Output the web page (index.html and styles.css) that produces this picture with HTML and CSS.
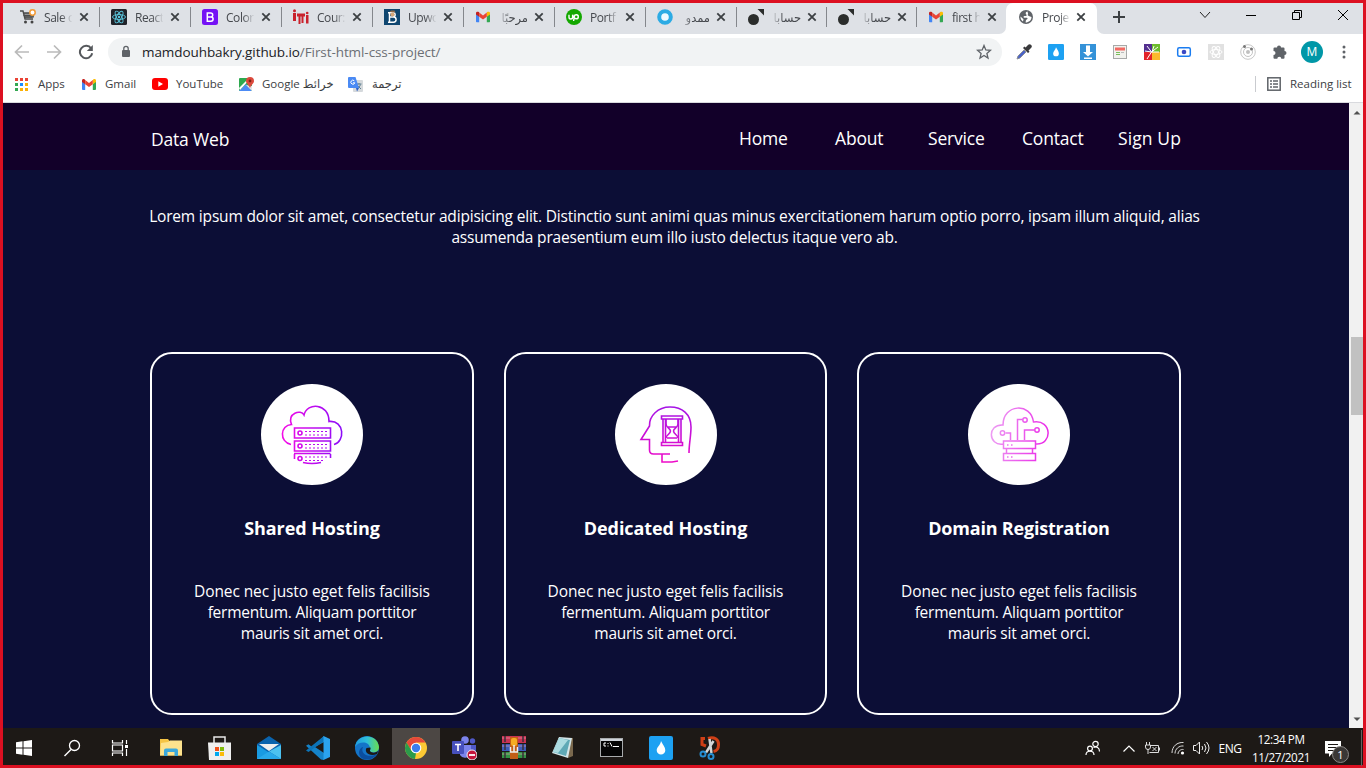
FILE: index.html
```html
<!DOCTYPE html>
<html lang="en">
<head>
<meta charset="utf-8">
<title>Project</title>
<link rel="stylesheet" href="styles.css">
</head>
<body>
<svg class="defs" width="0" height="0">
  <defs>
    <symbol id="gmail" viewBox="0 0 14 11"><path d="M0 1.5V10a1 1 0 0 0 1 1h2.2V5z" fill="#4285f4"/><path d="M14 1.5V10a1 1 0 0 1-1 1h-2.2V5z" fill="#34a853"/><path d="M10.8 1.3V5.2L14 2.9V1.5C14 0 12.300-.5 11.200.4z" fill="#fbbc04"/><path d="M0 1.500C0 0 1.700-.5 2.800.4l.4.5v4.300L0 2.900z" fill="#c5221f"/><path d="M3.200 1 7 3.900 10.800 1v4.200L7 8.100 3.200 5.200z" fill="#ea4335"/></symbol>
    <symbol id="close" viewBox="0 0 10 10"><path d="M1.300 1.300 8.700 8.700M8.700 1.300 1.300 8.700" stroke="#3c4043" stroke-width="1.800"/></symbol>
    <symbol id="dot" viewBox="0 0 16 16"><circle cx="5.500" cy="10.500" r="5.500" fill="#2b2d2c"/><path d="M9.500 0H16V6.500z" fill="#2b2d2c"/></symbol>
    <symbol id="drop" viewBox="0 0 24 24"><rect width="24" height="24" rx="2" fill="#1da1f2"/><path d="M12 5c2 4 4.300 6.300 4.300 9.200a4.300 4.300 0 0 1-8.600 0C7.700 11.300 11.500 9 12 5z" fill="#fff"/></symbol>
    <linearGradient id="gA" gradientUnits="userSpaceOnUse" x1="22" y1="0" x2="82" y2="0"><stop offset="0" stop-color="#f30be6"/><stop offset="1" stop-color="#8a0cf8"/></linearGradient>
    <linearGradient id="gB" gradientUnits="userSpaceOnUse" x1="0" y1="22" x2="0" y2="78"><stop offset="0" stop-color="#a414e6"/><stop offset="1" stop-color="#ee0cc8"/></linearGradient>
    <linearGradient id="gC" gradientUnits="userSpaceOnUse" x1="0" y1="0" x2="60" y2="10"><stop offset="0" stop-color="#eda6f4"/><stop offset="1" stop-color="#ea2be8"/></linearGradient>
  </defs>
</svg>
<div class="screen">
  <header class="tabstrip">
    <div class="tabs">
      <div class="tab"><svg width="16" height="16" viewBox="0 0 16 16"><path d="M0 2h3l2 8h8M4 4h10l-1 4H5" fill="none" stroke="#4b4b4b" stroke-width="1.400"/><path d="M5 4v5M7 4v5M9 4v5M11 4v5M3.500 6.500H13" stroke="#4b4b4b"/><circle cx="5.500" cy="13" r="1.500" fill="#444"/><circle cx="12" cy="13" r="1.500" fill="#444"/><circle cx="12.500" cy="3.500" r="2.700" fill="#fff" stroke="#f29a36" stroke-width="1.500"/></svg><span class="title">Sale o</span><svg class="x"><use href="#close"/></svg></div>
      <div class="tab"><svg width="16" height="16" viewBox="0 0 16 16"><rect width="16" height="16" rx="1.500" fill="#20232a"/><g fill="none" stroke="#5bc8e0" stroke-width=".9"><ellipse cx="8" cy="8" rx="6.500" ry="2.500"/><ellipse cx="8" cy="8" rx="6.500" ry="2.500" transform="rotate(60 8 8)"/><ellipse cx="8" cy="8" rx="6.500" ry="2.500" transform="rotate(120 8 8)"/></g><circle cx="8" cy="8" r="1.200" fill="#5bc8e0"/></svg><span class="title">React</span><svg class="x"><use href="#close"/></svg></div>
      <div class="tab"><svg width="16" height="16" viewBox="0 0 16 16"><rect width="16" height="16" rx="2.500" fill="#7512f5"/><path d="M5.300 4h3.400a2 2 0 0 1 0 4H5.300zm0 4h3.700a2 2 0 0 1 0 4.200H5.300z" fill="none" stroke="#fff" stroke-width="1.500"/></svg><span class="title">Color</span><svg class="x"><use href="#close"/></svg></div>
      <div class="tab"><svg width="16" height="16" viewBox="0 0 16 16"><path d="M0 4h3v8H0zM4 4.500h8v3h-1.500V14H8.500V7.500H7.500V15h-2V7.500H4zM13 6h2.500v8.500H13z" fill="#c9222c"/><circle cx="1.500" cy="1.700" r="1.500" fill="#c9222c"/><circle cx="14.200" cy="4" r="1.300" fill="#c9222c"/></svg><span class="title">Cour:</span><svg class="x"><use href="#close"/></svg></div>
      <div class="tab"><svg width="16" height="16" viewBox="0 0 16 16"><rect width="16" height="16" fill="#0f4670"/><path d="M5.500 4v9M4 13.200h5.500a2.600 2.600 0 0 0 0-5.200H6M4 3.700h5a2 2 0 0 1 0 4.300" fill="none" stroke="#fff" stroke-width="1.500"/><circle cx="8.500" cy="5.500" r="2" fill="#d7a778"/><path d="M5.500 3 7 1.500h3.500l1 2z" fill="#8d6847"/></svg><span class="title">Upwo</span><svg class="x"><use href="#close"/></svg></div>
      <div class="tab"><svg width="16" height="16" viewBox="-1 -2.500 16 16"><use href="#gmail" width="14" height="11"/></svg><span class="title rtl" dir="rtl">مرحبًا</span><svg class="x"><use href="#close"/></svg></div>
      <div class="tab"><svg width="16" height="16" viewBox="0 0 16 16"><circle cx="8" cy="8" r="8" fill="#14a800"/><path d="M3 5.800v2.400a1.800 1.800 0 0 0 3.600 0V5.800c.5 1.700 1.500 4 3.700 4a2 2 0 1 0-2-2.200L7.600 12" fill="none" stroke="#fff" stroke-width="1.400"/></svg><span class="title">Portf</span><svg class="x"><use href="#close"/></svg></div>
      <div class="tab"><svg width="16" height="16" viewBox="0 0 16 16"><circle cx="8" cy="8" r="5.800" fill="#eef9ff" stroke="#2cabe4" stroke-width="4"/></svg><span class="title rtl" dir="rtl">ممدو</span><svg class="x"><use href="#close"/></svg></div>
      <div class="tab narrow"><svg width="16" height="16"><use href="#dot"/></svg><span class="title rtl" dir="rtl">حسابا</span><svg class="x"><use href="#close"/></svg></div>
      <div class="tab narrow"><svg width="16" height="16"><use href="#dot"/></svg><span class="title rtl" dir="rtl">حسابا</span><svg class="x"><use href="#close"/></svg></div>
      <div class="tab narrow last"><svg width="16" height="16" viewBox="-1 -2.500 16 16"><use href="#gmail" width="14" height="11"/></svg><span class="title">first h</span><svg class="x"><use href="#close"/></svg></div>
    </div>
    <div class="tab active"><svg width="16" height="16" viewBox="0 0 16 16"><circle cx="8" cy="8" r="7" fill="#5f6368"/><path d="M9.500 2.400c-2 .3-2.300 2.200-1.200 3 1 .8 0 1.700-1.800 1.700-1 0-1.400 1.500-.4 1.700h2.700c1 0 1 1.500 0 1.700-1 .3-1 1.400-1.200 3 3.300 0 5.900-2.300 5.900-5.500L11.300 7.200c-1.300-.3-2.300-1.200-1.200-2.200zM2.500 7.500l3 2.800-.5 2.200C3.200 11.500 2.400 9.800 2.500 7.500z" fill="#fff"/></svg><span class="title">Proje</span><svg class="x"><use href="#close"/></svg></div>
    <div class="winbar">
      <svg width="12" height="12" viewBox="0 0 12 12"><path d="M6 0v12M0 6h12" stroke="#3c4043" stroke-width="2"/></svg>
      <svg class="wc chev" width="12" height="12" viewBox="0 0 12 12"><path d="M1 3l5 5.500L11 3" fill="none" stroke="#222"/></svg>
      <svg class="wc mini" width="12" height="12" viewBox="0 0 12 12"><path d="M1 6.500h10" stroke="#000"/></svg>
      <svg class="wc maxi" width="12" height="12" viewBox="0 0 12 12"><path d="M1.500 3.500h7v7h-7zM3.500 3.500v-2h7v7h-2" fill="none" stroke="#000"/></svg>
      <svg class="wc quit" width="12" height="12" viewBox="0 0 12 12"><path d="M1 1l10 10M11 1 1 11" stroke="#000"/></svg>
    </div>
  </header>

  <div class="toolbar">
    <svg width="16" height="16" viewBox="0 0 16 16"><path d="M15 8H2M8 1.500 1.500 8 8 14.500" fill="none" stroke="#bababa" stroke-width="1.700"/></svg>
    <svg width="16" height="16" viewBox="0 0 16 16"><path d="M1 8h13M8 1.500 14.500 8 8 14.500" fill="none" stroke="#bababa" stroke-width="1.700"/></svg>
    <svg width="16" height="16" viewBox="0 0 16 16"><path d="M13.200 4.500A6.200 6.200 0 1 0 14.200 9.300" fill="none" stroke="#55585c" stroke-width="2"/><path d="M14.800 1v6H8.800z" fill="#55585c"/></svg>
    <div class="omnibox">
      <svg width="12" height="14" viewBox="0 0 12 14"><rect x="2" y="5" width="8" height="7" rx="1" fill="#5f6368"/><path d="M3.800 5.500V3.600a2.200 2.200 0 0 1 4.400 0v1.900" fill="none" stroke="#5f6368" stroke-width="1.300"/></svg>
      <span class="url"><b>mamdouhbakry.github.io</b>/First-html-css-project/</span>
      <svg class="star" width="16" height="16" viewBox="0 0 16 16"><path d="M8 1.500l1.800 4.400 4.700.4-3.600 3.100 1.100 4.600L8 11.500 4 14l1.100-4.600L1.500 6.300l4.700-.4z" fill="none" stroke="#5f6368" stroke-width="1.300"/></svg>
    </div>
    <div class="exts">
      <svg width="16" height="16" viewBox="0 0 16 16"><path d="M1 15l1-3 6-6 2 2-6 6z" fill="#4a63c9" stroke="#8b8f98"/><path d="M7 4l5 5 1.500-1.300-1-1.200 2.500-2.500A2 2 0 0 0 12.200.8L9.600 3.500 8.400 2.600z" fill="#3a3a3c"/></svg>
      <svg width="16" height="16"><use href="#drop"/></svg>
      <svg width="16" height="16" viewBox="0 0 16 16"><rect width="16" height="16" fill="#3492d8"/><path d="M6 1.500h4V8h3L8 12.500 3 8h3zM4 13.500h8V15H4z" fill="#fff"/></svg>
      <svg width="16" height="16" viewBox="0 0 16 16"><rect x="1.500" y="1.500" width="13" height="13" fill="#f2f2ee" stroke="#a7a9a8"/><rect x="3" y="3.500" width="10" height="3" fill="#f26a63"/><path d="M4 8.500h4M4 10.500h4" stroke="#79bd5b"/><path d="M9 8.500h3" stroke="#bbb"/></svg>
      <svg width="16" height="16" viewBox="0 0 16 16"><rect width="8" height="8" fill="#54308f"/><rect x="8" width="8" height="8" fill="#6dbd2d"/><rect y="8" width="8" height="8" fill="#e2222b"/><rect x="8" y="8" width="8" height="8" fill="#fbb92d"/><path d="M3 15 7.500 8M7.500 8 14 3M7.500 8 3 2M8 8l2-6M7.500 8H15M7.500 8 1 7" stroke="#fff" stroke-width="1" fill="none"/></svg>
      <svg width="16" height="16" viewBox="0 0 16 16"><rect x="1.700" y="3.700" width="12.600" height="8.600" rx="1.500" fill="#fff" stroke="#1a7cf0" stroke-width="1.500"/><circle cx="8" cy="8" r="2.300" fill="#3b49c4"/></svg>
      <svg width="16" height="16" viewBox="0 0 16 16"><rect width="16" height="16" fill="#e1e1e1"/><g fill="none" stroke="#fff"><ellipse cx="8" cy="8" rx="6" ry="2.500"/><ellipse cx="8" cy="8" rx="6" ry="2.500" transform="rotate(60 8 8)"/><ellipse cx="8" cy="8" rx="6" ry="2.500" transform="rotate(120 8 8)"/></g></svg>
      <svg width="16" height="16" viewBox="0 0 16 16"><circle cx="8" cy="8" r="7.300" fill="none" stroke="#c8c8c8"/><circle cx="8" cy="8" r="4.500" fill="none" stroke="#c4c4c4"/><circle cx="8" cy="8" r="2" fill="#c0c0c0"/><circle cx="4.500" cy="2.500" r="1.500" fill="#777"/><circle cx="11.500" cy="5" r="1.500" fill="#777"/></svg>
      <svg width="16" height="16" viewBox="0 0 16 16"><path d="M1.500 4.500a1 1 0 0 1 1-1H5a2 2 0 1 1 4 0h2.500a1 1 0 0 1 1 1V7a2 2 0 1 1 0 4v2.700a1 1 0 0 1-1 1H9.300a2 2 0 0 0-4 0H2.500a1 1 0 0 1-1-1V11a2 2 0 0 0 0-4z" fill="#5f6368"/></svg>
      <span class="avatar">M</span>
      <svg width="16" height="16" viewBox="0 0 16 16"><g fill="#5f6368"><circle cx="8" cy="3" r="1.500"/><circle cx="8" cy="8" r="1.500"/><circle cx="8" cy="13" r="1.500"/></g></svg>
    </div>
  </div>

  <div class="bookmarks">
    <div class="bm apps"><svg width="13" height="13" viewBox="0 0 13 13"><path d="M0 0h3v3H0zM5 0h3v3H5zM10 0h3v3h-3z" fill="#ea4335"/><path d="M0 5h3v3H0z" fill="#34a853"/><path d="M5 5h3v3H5z" fill="#1a8cff"/><path d="M10 5h3v3h-3zM5 10h3v3H5zM10 10h3v3h-3z" fill="#fbb005"/><path d="M0 10h3v3H0z" fill="#34a853"/></svg><span>Apps</span></div>
    <div class="bm gm"><svg width="14" height="11"><use href="#gmail"/></svg><span>Gmail</span></div>
    <div class="bm yt"><svg width="16" height="12" viewBox="0 0 16 12"><rect width="16" height="12" rx="3" fill="#f00"/><path d="M6.300 3.300v5.400L11 6z" fill="#fff"/></svg><span>YouTube</span></div>
    <div class="bm mp"><svg width="15" height="15" viewBox="0 0 15 15"><rect y="1" width="13" height="13" rx="1" fill="#2da94f"/><path d="M0 14 7 7l6 7z" fill="#4c8bf5"/><path d="M0 11 10 1h2L1 13z" fill="#fff"/><path d="M7 8l6 6V9z" fill="#e4e6e8"/><path d="M11 0a4 4 0 0 1 4 4c0 2.500-3 4-4 7-1-3-4-4.500-4-7a4 4 0 0 1 4-4z" fill="#dc4a3d"/><circle cx="11" cy="4" r="1.400" fill="#7d2317"/></svg><span>Google خرائط</span></div>
    <div class="bm tr"><svg width="15" height="15" viewBox="0 0 15 15"><rect x="5" y="3" width="10" height="12" rx="1" fill="#d5d9dc"/><path d="M8.500 7h5M11 6v1.500M12.500 7.500c-1 2.500-2 3.500-3.500 4M9.500 8.500l3.500 3.500" stroke="#5e7f91" fill="none"/><path d="M1 0h6.500l3.500 11H1a1 1 0 0 1-1-1V1a1 1 0 0 1 1-1z" fill="#4a8af4"/><path d="M8 11h3l-2 3.500z" fill="#2c5fc4"/><path d="M6.300 3.800a2 2 0 1 0 .5 2H5" fill="none" stroke="#fff"/></svg><span lang="ar">ترجمة</span></div>
    <div class="reading"><svg width="14" height="14" viewBox="0 0 14 14"><rect x=".8" y=".8" width="12.400" height="12.400" fill="#fff" stroke="#5f6368" stroke-width="1.500"/><path d="M3 4h2M6 4h5M3 7h2M6 7h5M3 10h2M6 10h5" stroke="#5f6368" stroke-width="1.500"/></svg><span>Reading list</span></div>
  </div>

  <div class="viewport">
    <main class="page">
      <nav class="nav">
        <span class="brand">Data Web</span>
        <ul class="menu"><li>Home</li><li>About</li><li>Service</li><li>Contact</li><li class="signup">Sign Up</li></ul>
      </nav>
      <p class="intro">Lorem ipsum dolor sit amet, consectetur adipisicing elit. Distinctio sunt animi quas minus exercitationem harum optio porro, ipsam illum aliquid, alias<br>assumenda praesentium eum illo iusto delectus itaque vero ab.</p>
      <section class="cards">
        <article class="card">
          <div class="disc"><svg width="102" height="102" viewBox="0 0 102 102" fill="none" stroke="url(#gA)" stroke-width="1.600"><path d="M30 60.500C18 58 19 41 30.500 40.500 26 29 40 25 43 31 46 18 68 19 68 37.500 84 36 84 58 73 60.500"/><path d="M33.500 44h36v10h-36zM33.500 57h36v10h-36zM33 69.500l36.500.01M33.500 70v5M69.500 70v4M42 78.500q9 2 18 0"/><circle cx="39" cy="49" r="2"/><circle cx="39" cy="62" r="2"/><circle cx="39" cy="74.500" r="2"/><path d="M44 47.500h23M44 51h23M44 60.500h23M44 64h23M44 73h23M44 76.500h20" stroke-width="1.100" stroke-dasharray="2 2"/></svg></div>
          <h3>Shared Hosting</h3>
          <p>Donec nec justo eget felis facilisis<br>fermentum. Aliquam porttitor<br>mauris sit amet orci.</p>
        </article>
        <article class="card">
          <div class="disc"><svg width="102" height="102" viewBox="0 0 102 102" fill="none" stroke="url(#gB)" stroke-width="1.600"><path d="M74 69c0-9 2-17 2-26C76 30 67 23 55 23 43 23 34 32 34.500 42L26 55.500h8.500V66c0 3 2 4 4 4H55M47 70v8h10l6-1"/><path d="M46.500 32h21v3h-21zM46.500 58.500h21v3h-21zM48 35v23.500M50.500 35v23.500M63.500 35v23.500M66 35v23.500"/><path d="M51 35v5c0 4 4.500 4 4.500 7s-4.500 4-4.500 7M63 35v5c0 4-4.500 4-4.500 7s4.500 4 4.500 7M53 43h8M52 54h10"/></svg></div>
          <h3>Dedicated Hosting</h3>
          <p>Donec nec justo eget felis facilisis<br>fermentum. Aliquam porttitor<br>mauris sit amet orci.</p>
        </article>
        <article class="card">
          <div class="disc"><svg width="102" height="102" viewBox="0 0 102 102"><g transform="translate(22 24)" fill="none" stroke="url(#gC)" stroke-width="1.500"><path d="M13 36C-2 38-3 16 13 17 13-4 41-6 43.500 14 62 11 63 37 46 36M13.500 33h32v7.500h-32zM13.500 45.500h32v7h-32zM16.500 41v4.500M42.500 41v4.500M20.500 32v-7h-5M27.500 32V11.500h5M34.500 32V22h10"/><circle cx="12.500" cy="25" r="2.200"/><circle cx="35" cy="12" r="2.200"/><circle cx="47" cy="22" r="2.200"/><path d="M17 37h1.500M21 37h1.500M17 49h1.500M21 49h1.500"/></g></svg></div>
          <h3 class="tight">Domain Registration</h3>
          <p>Donec nec justo eget felis facilisis<br>fermentum. Aliquam porttitor<br>mauris sit amet orci.</p>
        </article>
      </section>
    </main>
    <div class="scroll">
      <svg width="8" height="5" viewBox="0 0 8 5"><path d="M.5 4.500 4 1l3.500 3.500z" fill="#505050"/></svg>
      <div class="thumb"></div>
      <svg class="down" width="8" height="5" viewBox="0 0 8 5"><path d="M.5.5 4 4 7.500.5z" fill="#505050"/></svg>
    </div>
  </div>

  <footer class="taskbar">
    <div class="sys">
      <i><svg width="16" height="16" viewBox="0 0 16 16"><path d="M0 2.300 6.500 1.300V7.500H0zM7.500 1.200 16 0v7.500H7.500zM0 8.500h6.500v6.200L0 13.700zM7.500 8.500H16V16L7.500 14.800z" fill="#fff"/></svg></i>
      <i><svg width="18" height="18" viewBox="0 0 18 18"><circle cx="11.500" cy="6.500" r="5" fill="none" stroke="#fff" stroke-width="1.300"/><path d="M8 10.500 1.500 17" stroke="#fff" stroke-width="1.500"/></svg></i>
      <i><svg width="18" height="16" viewBox="0 0 18 16"><path d="M1.500 0v3h10V0M1.500 16v-3h10v3M1.500 5h10v6h-10zM15.500 0v4M15.500 9v7" fill="none" stroke="#fff" stroke-width="1.200"/><path d="M14 5h3v3h-3z" fill="#fff"/></svg></i>
    </div>
    <div class="pinned">
      <i><svg width="22" height="19" viewBox="0 0 22 19"><path d="M0 1h8l1.500 2H22v14.500H0z" fill="#f5c445"/><path d="M1 5 8 4l2-1.500h12v15H0z" fill="#fde28d"/><path d="M4 18v-5.500a2 2 0 0 1 2-2h10a2 2 0 0 1 2 2V18h-3.500v-4h-7v4z" fill="#3ba8dc"/></svg></i>
      <i><svg width="23" height="24" viewBox="0 0 23 24"><path d="M6 7V1h11v6" fill="none" stroke="#e8e8e8" stroke-width="1.500"/><path d="M0 6.500h23V24H1z" fill="#efefef"/><path d="M7 11h4v4H7z" fill="#f1511b"/><path d="M12 11h4v4h-4z" fill="#80bb0a"/><path d="M7 16h4v4H7z" fill="#00a8ef"/><path d="M12 16h4v4h-4z" fill="#fbbc09"/></svg></i>
      <i><svg width="24" height="23" viewBox="0 0 24 23"><path d="M0 8 12 0l12 8v15H0z" fill="#0a63ad"/><path d="M2 8h20L12 15z" fill="#eee"/><path d="M0 9l12 7.500L24 23H0z" fill="#199be2"/><path d="M24 9v14L12 15.500z" fill="#4cc2f0"/><path d="M0 23 12 15.500 24 23z" fill="#29a9ea"/></svg></i>
      <i><svg width="24" height="24" viewBox="0 0 24 24"><path d="M18 0 6 11 2.500 8.300 0 9.700l15 13.800L18 24V17L9 11l9-5z" fill="#1583c9"/><path d="M0 14.500 2.500 16 18 5V0z" fill="#0c73b7"/><path d="M17.500 0 24 3v18l-6.500 3z" fill="#2ba3ee"/></svg></i>
      <i><svg width="24" height="24" viewBox="0 0 24 24"><defs><linearGradient id="ed"><stop offset="0" stop-color="#1f9ce0"/><stop offset=".5" stop-color="#2fbfdb"/><stop offset="1" stop-color="#6add4c"/></linearGradient></defs><circle cx="12" cy="12" r="12" fill="#1474c8"/><path d="M0 11C1-2 22-4 24 11c0 5-5 6-8 5-3-1-1-2-1-4C14 5 4 5 0 11z" fill="url(#ed)"/><path d="M8 11c-3 6 4 12 14 7-4 7-17 8-18-1 0-4 3-6 4-6z" fill="#0b4e9f"/><path d="M15.500 11.500c.5 2-1 2.500-.5 3.500 2 2.500 6 2 8.500-.5l-1.500 3.500c-8 3-13-2-10.500-6z" fill="#1d1916"/></svg></i>
      <i class="on"><svg width="22" height="22" viewBox="0 0 22 22"><circle cx="11" cy="11" r="11" fill="#fcc934"/><path d="M1.500 5.500A11 11 0 0 1 20.500 5.500H11L6.300 13.800z" fill="#e5493a"/><path d="M1.500 5.500 6.500 13.800 11 16l-1 6A11 11 0 0 1 1.500 5.500z" fill="#2b9b4b"/><circle cx="11" cy="11" r="5.300" fill="#fff"/><circle cx="11" cy="11" r="4.200" fill="#3b7ded"/></svg></i>
      <i><svg width="25" height="24" viewBox="0 0 25 24"><circle cx="13" cy="4" r="3.800" fill="#7b83eb"/><circle cx="20.500" cy="5" r="2.700" fill="#5059c9"/><path d="M17 9h7v7a4 4 0 0 1-7 1z" fill="#5059c9"/><path d="M8 9h11v7a6 6 0 0 1-11 3z" fill="#7b83eb"/><rect y="5" width="12" height="13" rx="1" fill="#4750bc"/><path d="M3 8.500h6M6 8.500V15" stroke="#fff" stroke-width="1.600"/><circle cx="20" cy="19" r="5" fill="#c4143a" stroke="#eee"/><path d="M17 19h6" stroke="#fff" stroke-width="1.800"/></svg></i>
      <i><svg width="24" height="23" viewBox="0 0 24 23"><path d="M0 0h24v7H0z" fill="#c73353"/><path d="M0 8h24v7H0z" fill="#3d5bb9"/><path d="M0 16h24v6H0z" fill="#329343"/><path d="M0 2h24M0 10h24M0 18h24" stroke="#efa9b5" opacity=".6"/><path d="M3 0v22M21 0v22" stroke="#392e37" stroke-width="1.500" stroke-dasharray="6 2"/><path d="M8 1h8v22H8z" fill="#c35e16"/><rect x="9" y="2" width="6" height="8" rx="2" fill="#f5ac24"/><path d="M8.500 11v5h7v-5M12 9v7" fill="none" stroke="#eee" stroke-width="1.500"/></svg></i>
      <i><svg width="24" height="23" viewBox="0 0 24 23"><path d="M7 2 22 2 22 20 17 22z" fill="#7a684d"/><path d="M8 1 21 2 17 22 1 17z" fill="#d5e6e9"/><path d="M8 2 19 4 15 20 2 16z" fill="#5fa9b6"/><path d="M8 2 17 4 7 17 2 16z" fill="#acdce1"/></svg></i>
      <i><svg width="23" height="19" viewBox="0 0 23 19"><rect x=".5" y=".5" width="22" height="18" fill="#050505" stroke="#a8abad"/><path d="M1 2h21" stroke="#cfd4da" stroke-width="2"/><path d="M6 5H4v3h2M8 5v1M8 7.500v1M10 4.500l2 4M13 8.500h6" fill="none" stroke="#fff"/></svg></i>
      <i><svg width="24" height="24"><use href="#drop"/></svg></i>
      <i><svg width="22" height="24" viewBox="0 0 22 24"><path d="M9 2.500C15 .5 20 3 19.500 9c0 4-2 6-5 6.500M6 2.500H3v6l4 1.500" fill="none" stroke="#cf3f16" stroke-width="3"/><path d="M10.500 3 12.500 17M14.500 5 7 16.500" stroke="#d3d5d6" stroke-width="2.500"/><circle cx="4" cy="18" r="2.500" fill="none" stroke="#268ed2" stroke-width="2"/><circle cx="12" cy="20.500" r="2.500" fill="none" stroke="#268ed2" stroke-width="2"/></svg></i>
    </div>
    <div class="tray">
      <i class="people"><svg width="16" height="16" viewBox="0 0 16 16" fill="none" stroke="#fff" stroke-width="1.200"><circle cx="10.500" cy="4" r="2.700"/><path d="M8.500 7.500c3-1.500 6 0 6 4"/><circle cx="5" cy="8.500" r="2.400"/><path d="M1 15c0-5 8-5 8 0"/></svg></i>
      <i><svg width="12" height="7" viewBox="0 0 12 7"><path d="M.5 6.500 6 1l5.500 5.500" fill="none" stroke="#fff" stroke-width="1.200"/></svg></i>
      <i class="battery"><svg width="17" height="13" viewBox="0 0 17 13" fill="none" stroke="#ddd"><path d="M2.500 0v3M5.500 0v3M1.500 3h5v2a2 2 0 0 1-5 0zM4 7v5M7 3.500h7.500v7H5.500M15.500 5.500v3M8.500 5l4 4M12.500 5l-4 4"/></svg></i>
      <i><svg width="14" height="14" viewBox="0 0 14 14" fill="none" stroke="#ddd"><path d="M1 12C1 5.500 6 1 12.500 1.500M4 12.500c0-4.500 4-8 8.500-7.500M7 13c0-3 3-5 5.500-4.500"/><circle cx="11.500" cy="12" r="1.600" fill="#fff" stroke="none"/></svg></i>
      <i><svg width="17" height="14" viewBox="0 0 17 14" fill="none" stroke="#eee"><path d="M.5 4.500h2.500L6.500 1v12L3 9.500H.5zM9 5q1.500 2 0 4M11.500 3q3 4 0 8M13.500 1q5 6 0 12"/></svg></i>
      <span class="eng">ENG</span>
      <div class="clock">12:34 PM<br>11/27/2021</div>
      <div class="notif"><svg width="16" height="16" viewBox="0 0 16 16"><path d="M0 0h16v12.500H7L4 16v-3.500H0z" fill="#fff"/><path d="M3 3.500h10M3 6.500h10M3 9.500h6" stroke="#1d1916" stroke-width="1.200"/></svg><span class="badge">1</span></div>
    </div>
  </footer>
</div>
</body>
</html>
```
FILE: styles.css
```css
* { box-sizing: border-box; }
body { margin: 0; font-family: "Open Sans", "Noto Sans", "DejaVu Sans", sans-serif; overflow: hidden; }
svg { display: block; flex: none; }
.defs { position: absolute; }
i { display: flex; align-items: center; justify-content: center; font-style: normal; }
.screen { width: 1366px; height: 768px; border: 3px solid #dc1021; display: flex; flex-direction: column; background: #fff; }

.tabstrip { display: flex; height: 31px; background: linear-gradient(#dee1e6 15px, #fff 15px); }
.tabs { display: flex; width: 1003px; padding-left: 6px; background: #dee1e6; border-bottom-right-radius: 7px; }
.tab { display: flex; flex: none; align-items: center; width: 91px; padding: 0 0 3px 11px; font-size: 12px; color: #45484d; }
.tab.narrow { width: 90px; }
.tab::after { content: ""; width: 1px; height: 20px; background: #84878c; margin-left: auto; }
.tab.last::after, .tab.active::after { display: none; }
.tab.active { background: #fff; border-radius: 7px 7px 0 0; padding-left: 12px; }
.title { width: 31px; margin-left: 8px; overflow: hidden; white-space: nowrap; letter-spacing: -0.45px; -webkit-mask-image: linear-gradient(90deg, #000 55%, transparent 92%); mask-image: linear-gradient(90deg, #000 55%, transparent 92%); }
.title.rtl { letter-spacing: 0; width: 29px; font-size: 11.5px; -webkit-mask-image: linear-gradient(270deg, #000 60%, transparent); mask-image: linear-gradient(270deg, #000 60%, transparent); }
.x { width: 10px; height: 10px; margin-left: 4px; }
.title.rtl + .x { margin-left: 6px; }
.tab.active .x { margin-left: 3px; }
.winbar { flex: 1; display: flex; align-items: center; padding: 0 0 3px 16px; background: #dee1e6; border-bottom-left-radius: 7px; }
.wc { margin-bottom: 5px; }
.chev { margin-left: 74px; }
.mini { margin-left: 34px; }
.maxi { margin-left: 34px; }
.quit { margin-left: 34px; }

.toolbar { height: 36px; display: flex; align-items: center; padding-left: 11px; gap: 16px; }
.omnibox { width: 894px; height: 28px; margin-left: -2px; border-radius: 14px; background: #f1f3f4; display: flex; align-items: center; padding: 0 10px 0 12px; }
.url { margin-left: 10px; font-size: 13.5px; letter-spacing: -0.08px; color: #6b6f74; white-space: nowrap; }
.url b { font-weight: 400; color: #202124; }
.star { margin-left: auto; }
.exts { display: flex; align-items: center; gap: 16px; margin-left: -2px; }
.avatar { width: 22px; height: 22px; margin: 0 -3px; border-radius: 50%; background: #0097a7; color: #fff; font-size: 12px; line-height: 22px; text-align: center; }

.bookmarks { height: 33px; display: flex; align-items: center; padding: 0 0 4px 12px; border-bottom: 1px solid #d9dade; font-size: 11.5px; color: #3c4043; white-space: nowrap; }
.bm { display: flex; align-items: center; }
.bm span, .reading span { margin-top: -1px; }
.apps { width: 67px; }
.apps svg { margin-right: 10px; }
.gm { width: 70px; }
.gm svg { margin-right: 9px; }
.yt { width: 87px; }
.yt svg { margin-right: 8px; }
.mp { width: 109px; }
.mp svg { margin-right: 8px; }
.tr svg { margin-right: 9px; }
.reading { margin-left: auto; width: 108px; height: 16px; display: flex; align-items: center; border-left: 1px solid #c9cbcf; padding-left: 11px; }
.reading svg { margin-right: 9px; }

.viewport { flex: 1; display: flex; min-height: 0; }
.page { width: 1346px; background: #0c0e36; color: #fff; }
.nav { height: 67px; background: #120029; display: flex; align-items: center; justify-content: space-between; padding: 4px 166px 0 148px; font-size: 17.5px; letter-spacing: -0.18px; white-space: nowrap; }
.menu { list-style: none; margin: 0; padding: 0 0 2px; display: grid; grid-template-columns: 96px 93px 94px 96px 65px; }
.signup { letter-spacing: 0.1px; }
.intro { margin: 36px 0 0; height: 146px; padding-right: 3px; text-align: center; font-size: 15.5px; line-height: 21px; letter-spacing: -0.19px; white-space: nowrap; }
.cards { display: grid; grid-template-columns: 324px 323px 324px; gap: 30px; padding-left: 147px; }
.card { height: 363px; border: 2px solid #fff; border-radius: 22px; padding-top: 30px; text-align: center; white-space: nowrap; }
.disc { width: 102px; height: 101px; margin: 0 auto; border-radius: 50%; background: #fff; overflow: hidden; }
.card h3 { margin: 30px 0 0; font-size: 18px; line-height: 26px; font-weight: 700; letter-spacing: -0.07px; }
.card h3.tight { letter-spacing: -0.2px; }
.card p { margin: 40px 0 0; font-size: 15.5px; line-height: 21px; letter-spacing: -0.23px; }
.card p::first-line { letter-spacing: -0.11px; }

.scroll { width: 14px; background: #f1f1f1; display: flex; flex-direction: column; align-items: center; padding: 7px 0 6px 2px; }
.thumb { width: 12px; height: 78px; margin-top: 222px; background: #c1c1c1; }
.down { margin-top: auto; }

.taskbar { height: 37px; background: #1d1916; display: flex; color: #fff; }
.sys { display: grid; grid-template-columns: 48px 48px 48px; margin-left: -3px; }
.pinned { display: grid; grid-template-columns: repeat(12, 49px); margin-left: 2px; }
.sys i, .pinned i { padding-top: 2px; }
.pinned .on { background: #4c4744; margin-left: 1px; padding-right: 1px; }
.tray { margin-left: auto; width: 282px; display: grid; grid-template-columns: 36px 24px 24px 25px 23px 34px 68px 47px; align-items: center; padding-top: 2px; font-size: 12px; white-space: nowrap; }
.tray .people { margin-right: 12px; }
.battery { padding-right: 2px; }
.eng { text-align: center; letter-spacing: -0.4px; }
.clock { text-align: center; font-size: 11.7px; line-height: 18px; letter-spacing: -0.42px; }
.notif { position: relative; align-self: stretch; padding: 11px 0 0 10px; border-right: 1px solid #66625f; }
.badge { position: absolute; left: 17px; top: 16px; width: 17px; height: 17px; border-radius: 50%; border: 1px solid #8a8886; background: #3a3735; font-size: 11px; line-height: 15px; text-align: center; }
```
